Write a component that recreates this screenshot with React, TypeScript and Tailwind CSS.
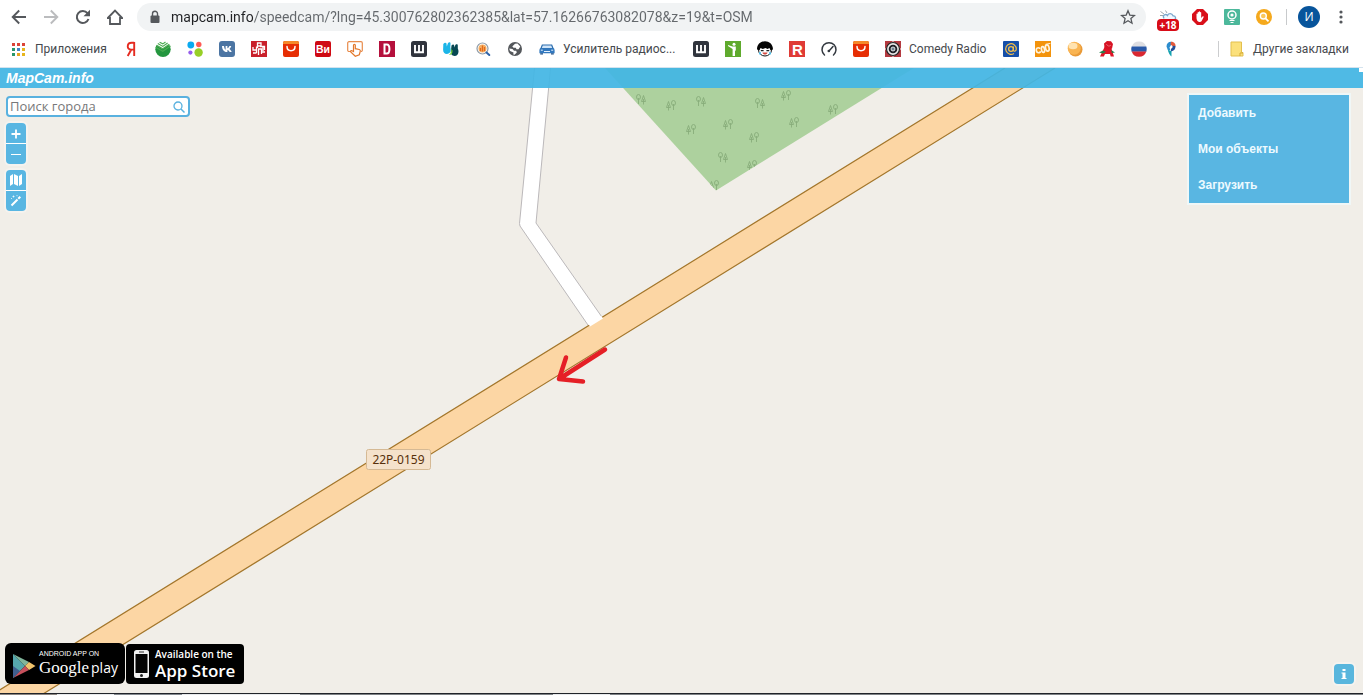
import type { ReactNode } from "react";

function Icon({ children, size = 16 }: { children: ReactNode; size?: number }) {
  return (
    <svg viewBox={`0 0 ${size} ${size}`} width={size} height={size} className="block shrink-0" aria-hidden="true">
      {children}
    </svg>
  );
}

const letter = { textAnchor: "middle" as const, fontFamily: "Liberation Sans, sans-serif", fontWeight: 700 };

function AliIcon() {
  return (
    <Icon>
      <rect width="16" height="16" rx="2" fill="#e62e04" />
      <path d="M0 2a2 2 0 0 1 2-2h12a2 2 0 0 1 2 2v1H0z" fill="#f5892a" />
      <path d="M4 5.5c0 5.5 8 5.5 8 0" fill="none" stroke="#fff" strokeWidth="1.5" strokeLinecap="round" />
    </Icon>
  );
}

function ShIcon() {
  return (
    <Icon>
      <rect width="16" height="16" rx="2.5" fill="#30343d" />
      <path d="M4 4v7.2h8V4M8 4v7" fill="none" stroke="#fff" strokeWidth="1.9" />
    </Icon>
  );
}

type Bookmark = { name: string; icon: ReactNode; label?: string; width?: string };

const bookmarks: Bookmark[] = [
  {
    name: "Яндекс",
    icon: (
      <Icon>
        <path d="M11.2 1v14M11.2 1.8H8.7C3.5 1.8 3.5 8.6 8.2 8.6h3M8.2 8.8L4.7 15" fill="none" stroke="#e52b20" strokeWidth="1.9" />
      </Icon>
    ),
  },
  {
    name: "Сбербанк",
    icon: (
      <Icon>
        <circle cx="8" cy="8.3" r="7.7" fill="#24963f" />
        <path d="M0 3.5L7.5 8 16 2.5V0H0z" fill="#fff" />
        <path d="M1.5 4.2l6.3 3.6 6.5-4.5M2.8 2.6l5 2.8 4.8-3.4M4.6 1.2l3.2 1.7L10.5 1M.6 6.3l7.2 4L15.5 5" fill="none" stroke="#49ab50" strokeWidth="1.2" />
      </Icon>
    ),
  },
  {
    name: "Авито",
    icon: (
      <Icon>
        <circle cx="3.8" cy="4" r="3.4" fill="#0aaaf0" />
        <circle cx="11.8" cy="3.5" r="2.7" fill="#ff5a55" />
        <circle cx="3.4" cy="11.6" r="2.1" fill="#965eeb" />
        <circle cx="11.6" cy="11.5" r="4.2" fill="#97cf26" />
      </Icon>
    ),
  },
  {
    name: "ВКонтакте",
    icon: (
      <Icon>
        <rect width="16" height="16" rx="3" fill="#4c75a3" />
        <path d="M3 5h2c.2 2 .8 3.2 1.6 3.7V5h1.8v2.3C9.3 7.1 10 6 10.4 5h1.9c-.4 1.3-1.1 2.3-1.9 2.9.9.5 1.8 1.5 2.3 3.1h-2.1c-.4-1.1-1.1-1.9-2.2-2.1V11C5 11.3 3.1 8.800 3 5z" fill="#fff" />
      </Icon>
    ),
  },
  {
    name: "РЧЛ",
    icon: (
      <Icon>
        <rect width="16" height="16" fill="#c9202b" />
        <path d="M6.500 7V2h3.500v3H6.500M2 6v3h3.500V5.500M5.500 9v3M7.500 14V8h3v5M9 5.500h4.500v3.500M12 5.500V10M2 12h3.500M10.500 11H14" fill="none" stroke="#fff" strokeWidth="1.300" />
      </Icon>
    ),
  },
  { name: "AliExpress", icon: <AliIcon /> },
  {
    name: "ВсеИнструменты",
    icon: (
      <Icon>
        <rect width="16" height="16" rx="2" fill="#cf0a13" />
        <text x="8" y="12" fontSize="10.5" fill="#fff" {...letter}>Ви</text>
      </Icon>
    ),
  },
  {
    name: "Опросы",
    icon: (
      <Icon>
        <path d="M4.500 10.500H2A1.300 1.300 0 0 1 .7 9.200V2A1.300 1.300 0 0 1 2 .7h12A1.300 1.300 0 0 1 15.300 2v7.200a1.300 1.300 0 0 1-1.300 1.300" fill="none" stroke="#e88c4c" strokeWidth="1.200" />
        <path d="M6.500 10.500V4.200c0-1.300 1.800-1.300 1.800 0v3.500l4 .8c1 .3 1.200 1 .9 2l-.9 3.200-4 1.500-4.600-4.300c-.5-1 .6-1.600 1.300-1.200z" fill="#fff" stroke="#e27629" strokeWidth="1.200" />
      </Icon>
    ),
  },
  {
    name: "Drom",
    icon: (
      <Icon>
        <rect width="16" height="16" fill="#b5103c" />
        <path d="M5.500 3.500h2.300c3.500 0 3.500 9 0 9H5.500z" fill="none" stroke="#fff" strokeWidth="2" />
      </Icon>
    ),
  },
  { name: "Штука", icon: <ShIcon /> },
  {
    name: "BlaBlaCar",
    icon: (
      <Icon>
        <path d="M.3 3C1.500 1.300 3 1.300 3.500 2.500L3.800 5.500 5 2C6.500.7 7.800 1.500 7.500 3L7.300 6.500C8.500 10 7 13 4 13S-.3 10.500.2 7z" fill="#1bb5e8" />
        <path d="M8.500 4.500C9.500 3 11 3 11.200 4.500V6.500L12.500 3.800C14 2.800 15 3.500 14.800 5V7.500C16.500 11 15 15 11.500 15S7.500 12 8 9z" fill="#074853" />
        <path d="M6.800 6c2.200 2 2.200 5.500-.8 7.800 2.300.5 3.700-1.500 3.500-4.300z" fill="#73d33a" />
      </Icon>
    ),
  },
  {
    name: "Поиск",
    icon: (
      <Icon>
        <circle cx="7.500" cy="7.500" r="5.500" fill="#fff" stroke="#8d9aa6" strokeWidth="1.200" />
        <circle cx="7.500" cy="7.500" r="4" fill="#f6b065" />
        <path d="M5.500 10V7M7.500 10.500V4.500M9.500 10V6" stroke="#e46a18" strokeWidth="1.300" />
        <path d="M11.500 11.500l2.800 2.500" stroke="#2d62a8" strokeWidth="2" strokeLinecap="round" />
      </Icon>
    ),
  },
  {
    name: "Сайт",
    icon: (
      <Icon>
        <circle cx="8" cy="8" r="7" fill="#54575b" />
        <path d="M8 2.800L10.500 2.500 13.300 5.500 11.500 8.200H9.500L8.800 6.800H6.500L5.300 5.500z" fill="#fff" />
        <path d="M2.200 7.500L5.500 8 7 9.800H9.200L9.800 11.500 7.500 13.800 6.300 13.500 6.500 11.500 3 10z" fill="#fff" />
      </Icon>
    ),
  },
  {
    name: "Усилитель",
    label: "Усилитель радиос...",
    width: "w-[122px]",
    icon: (
      <Icon>
        <path d="M3.300 4h9.400l1.300 3.500H2z" fill="#cfe4f8" stroke="#2c6dad" strokeWidth="1.200" />
        <path d="M1 7.300h14l.6 1.700v3.300H.4V9z" fill="#3278be" />
        <path d="M1.200 12.200H4v1.300H1.200zM12 12.200h2.800v1.300H12z" fill="#204f86" />
        <path d="M5 10.500h6M1.800 9.200h2M12.200 9.200h2" stroke="#e4f1ff" strokeWidth="1" />
      </Icon>
    ),
  },
  { name: "Штука 2", icon: <ShIcon /> },
  {
    name: "Человек",
    icon: (
      <Icon>
        <rect width="16" height="16" fill="#5faa2d" />
        <circle cx="9" cy="3.300" r="1.500" fill="#fff" />
        <path d="M3 4l4.500 1.600h3.300v4l-.8.200V15H7.600V8L3 5z" fill="#fff" />
      </Icon>
    ),
  },
  {
    name: "Пикабу",
    icon: (
      <Icon>
        <ellipse cx="8" cy="9" rx="6.500" ry="6" fill="#fff" stroke="#151515" />
        <path d="M0 8.500C0-2.500 16-2.500 16 8.500l-2.500.7-1-2.200-2 1-2-1L5.800 8 3.500 7 2.500 9.200z" fill="#050505" />
        <path d="M3.800 9.600h2.800M9.400 9.600h2.800" stroke="#222" strokeWidth="1.200" />
        <path d="M5.500 11.500h5c-.5 2.800-4.500 2.800-5 0z" fill="#d54c43" />
        <path d="M3 11v2.500M13 11v2.500" stroke="#55c4ee" strokeWidth="1.800" />
      </Icon>
    ),
  },
  {
    name: "Р",
    icon: (
      <Icon>
        <rect width="16" height="16" fill="#df3b36" />
        <text x="8.300" y="13.500" fontSize="15" fill="#fff" {...letter}>R</text>
      </Icon>
    ),
  },
  {
    name: "Скорость",
    icon: (
      <Icon>
        <path d="M3.500 14a7 7 0 1 1 9 0M8 10l4-4.500" fill="none" stroke="#333940" strokeWidth="1.500" strokeLinecap="round" />
        <circle cx="7.800" cy="10" r="1.300" fill="#333940" />
      </Icon>
    ),
  },
  { name: "AliExpress 2", icon: <AliIcon /> },
  {
    name: "Радио",
    label: "Comedy Radio",
    width: "w-[86px]",
    icon: (
      <Icon>
        <rect width="16" height="16" fill="#b43a40" />
        <path d="M8 0l8 8-8 8-8-8z" fill="#eee" />
        <circle cx="8" cy="8" r="6.500" fill="#e9e9e9" stroke="#222" strokeWidth="1.200" />
        <circle cx="8" cy="8" r="4.300" fill="#1e2026" />
        <circle cx="8" cy="8" r="2" fill="#6f8190" stroke="#fff" strokeWidth=".8" />
      </Icon>
    ),
  },
  {
    name: "Почта",
    icon: (
      <Icon>
        <rect width="16" height="16" rx="1" fill="#164fa9" />
        <circle cx="8" cy="8" r="2.400" fill="none" stroke="#f3bd48" strokeWidth="1.300" />
        <path d="M10.400 5.500v3.700c.2 1.700 2.900 1.300 2.900-1.200A5.300 5.300 0 1 0 11 12.400" fill="none" stroke="#f3bd48" strokeWidth="1.200" />
      </Icon>
    ),
  },
  {
    name: "Кольца",
    icon: (
      <Icon>
        <rect width="16" height="16" fill="#f3930c" />
        <g fill="none" stroke="#fff4df" strokeWidth="1.700" strokeLinecap="round">
          <path d="M4.800 7.200C2.500 6 1 7.500 1.300 9.500S3.500 12.500 5.300 11" />
          <ellipse cx="8" cy="8.500" rx="1.500" ry="3" transform="rotate(-12 8 8.500)" />
          <ellipse cx="12.300" cy="7" rx="1.800" ry="3.200" transform="rotate(-12 12.300 7)" />
          <path d="M11 3.200l4-.7" strokeWidth="1" />
        </g>
      </Icon>
    ),
  },
  {
    name: "Шар",
    icon: (
      <Icon>
        <circle cx="8.500" cy="8.500" r="7" fill="#e99a38" />
        <circle cx="7.200" cy="7.200" r="6.500" fill="#f9b452" />
        <ellipse cx="6" cy="5" rx="4.500" ry="3.200" fill="#ffe3b0" />
      </Icon>
    ),
  },
  {
    name: "Ашан",
    icon: (
      <Icon>
        <path d="M1 15.500L7 3h4l4 12.500h-3.300L11 13H6l-1.200 2.500z" fill="#df1527" />
        <path d="M5 2.500L8 0l4 .3L14 3l-1 4.500-4 1.200L5.500 6.500z" fill="#d71324" />
        <path d="M0 11.500L4 9.500l3 1.300-3 1.700zM12 9l4 2.500-3 .5z" fill="#26804a" />
        <path d="M7.500 3c1 2.500 3 2.500 4.500 1" stroke="#f5a5ab" strokeWidth=".6" fill="none" />
      </Icon>
    ),
  },
  {
    name: "Россия",
    icon: (
      <Icon>
        <path d="M.7 5.700a7.700 7.700 0 0 1 14.600 0z" fill="#dedee2" />
        <path d="M.7 5.500h14.600c.5 1.700.5 3.500 0 5.200H.7a8 8 0 0 1 0-5.200z" fill="#2959a8" />
        <path d="M.7 10.500h14.600a7.700 7.700 0 0 1-14.600 0z" fill="#da2831" />
      </Icon>
    ),
  },
  {
    name: "Ростелеком",
    icon: (
      <Icon>
        <path d="M3.500 5.500C3.500 2 6 .5 8.500.8L8 4 6.500 6.500 7.500 9.500 4.800 9z" fill="#2c8dce" />
        <path d="M8 .7c3-.2 4.800 2 4.500 4.800L9.500 5 7.500 3.500z" fill="#e4593b" />
        <path d="M12.500 5c.2 3-1.500 5-4.500 5.500V7.800C9.300 7.300 9.800 6.500 9.500 4.800z" fill="#224f98" />
        <path d="M4.800 8.800l3.700 1.500v5.200C6.500 14 5.300 11.500 4.800 8.800z" fill="#15a2b0" />
      </Icon>
    ),
  },
];

const appColors = ["bg-[#db4437]", "bg-[#db4437]", "bg-[#db4437]", "bg-[#28966a]", "bg-[#4285c4]", "bg-[#e7b51d]", "bg-[#28966a]", "bg-[#e7a51d]", "bg-[#e7b51d]"];

const trees: [number, number, boolean][] = [
  [641, 31, false], [671, 37, true], [701, 33, false], [760, 35, false], [786, 27, true], [833, 41, true], [691, 61, true], [728, 56, true], [754, 69, true], [794, 54, true], [723, 89, false], [752, 97, true], [714, 117, true],
];

function Tree({ x, y, flip }: { x: number; y: number; flip: boolean }) {
  return (
    <g transform={`translate(${x} ${y})${flip ? " scale(-1 1)" : ""}`} fill="none" stroke="#88ad7b" strokeWidth=".9">
      <ellipse cx="-2.500" cy="-2" rx="2" ry="2.500" />
      <path d="M-2.500-1V5M2.500-3.500L.5 2.500h4zM2.500 0v5.500" />
    </g>
  );
}

function MapCanvas() {
  return (
    <svg className="absolute inset-0 h-full w-full" viewBox="0 0 1363 625" preserveAspectRatio="xMidYMid slice" role="img" aria-label="Карта">
      <defs>
        <clipPath id="wood"><path d="M605 0L716 122.500 914 0z" /></clipPath>
      </defs>
      <rect width="1363" height="625" fill="#f1eee8" />
      <path d="M605 0L716 122.500 914 0z" fill="#add19e" />
      <g clipPath="url(#wood)">
        {trees.map(([x, y, flip]) => <Tree key={`${x}-${y}`} x={x} y={y} flip={flip} />)}
      </g>
      <path d="M534.500 0L519.500 155.500 520 158 590 260 604 252 536 155 550.500 0z" fill="#fff" stroke="#bbb8ba" />
      <path d="M1005 0L-7 626H43L1055 0z" fill="#fcd6a4" />
      <path d="M1005 0L-7 626M43 626L1055 0" fill="none" stroke="#a3762b" strokeWidth="1.200" />
      <path d="M588.500 256L601.500 248 603 250.500 590 258.500z" fill="#fff" />
      <path d="M605 281.500L559 311M566 289.500L559 311 583 313.500" fill="none" stroke="#e51f26" strokeWidth="4.500" strokeLinecap="round" strokeLinejoin="round" />
      <rect x="366.500" y="381.500" width="64" height="20" rx="2" fill="#f5e2cb" stroke="#d5b994" />
      <text x="398.500" y="396" textAnchor="middle" fontFamily="Noto Sans, sans-serif" fontSize="12" fill="#57300b">22Р-0159</text>
    </svg>
  );
}

const toolButton = "flex size-8 shrink-0 items-center justify-center text-[#55585c]";
const mapButton = "flex h-5 w-5 items-center justify-center bg-[#59b6e2] text-white";

function Toolbar() {
  return (
    <div className="flex h-[34px] items-center pl-[3px] pr-[6px]">
      <button className={toolButton} aria-label="Назад">
        <Icon><path d="M15 8H2M8.200 1.500L1.700 8l6.500 6.500" fill="none" stroke="currentColor" strokeWidth="1.900" /></Icon>
      </button>
      <button className="flex size-8 shrink-0 items-center justify-center text-[#bbbcbe]" aria-label="Вперёд">
        <Icon><path d="M1 8h13M7.800 1.500L14.300 8l-6.500 6.500" fill="none" stroke="currentColor" strokeWidth="1.900" /></Icon>
      </button>
      <button className={toolButton} aria-label="Обновить">
        <Icon>
          <path d="M13.500 10A6 6 0 1 1 12.500 4.200L14 5.800" fill="none" stroke="currentColor" strokeWidth="2" />
          <path d="M15 .8v6.500H8.500z" fill="currentColor" />
        </Icon>
      </button>
      <button className={toolButton} aria-label="Домашняя страница">
        <Icon><path d="M.8 9L8 1.600 15.200 9H13v6H3V9z" fill="none" stroke="currentColor" strokeWidth="1.800" /></Icon>
      </button>
      <div className="ml-[6px] flex h-7 min-w-0 flex-1 items-center rounded-full bg-[#f1f3f4] pl-[10px] pr-[10px] text-[#55585c]">
        <Icon>
          <rect x="3.500" y="6.500" width="9" height="7.500" rx="1" fill="currentColor" />
          <path d="M5.500 7V4.700a2.500 2.500 0 0 1 5 0V7" fill="none" stroke="currentColor" strokeWidth="1.400" />
        </Icon>
        <input
          aria-label="Адрес"
          className="ml-2 min-w-0 flex-1 bg-[linear-gradient(90deg,#202124_82px,#64686c_82px)] bg-clip-text font-['Roboto','Noto_Sans',sans-serif] text-sm text-transparent outline-none"
          defaultValue="mapcam.info/speedcam/?lng=45.300762802362385&lat=57.16266763082078&z=19&t=OSM"
        />
        <button aria-label="Добавить в закладки">
          <Icon><path d="M8 1.800l1.800 4.300 4.700.4-3.600 3.100 1.100 4.600L8 11.700l-4 2.500 1.100-4.600-3.600-3.100 4.700-.4z" fill="none" stroke="currentColor" strokeWidth="1.300" /></Icon>
        </button>
      </div>
      <button className="relative ml-[6px] flex size-8 shrink-0 justify-center" aria-label="Погода">
        <svg width="24" height="24" viewBox="0 0 24 24" className="mt-2" aria-hidden="true">
          <path d="M8 9.500c-2-3.500 1.500-5 3.500-3 1-2.500 4.500-2.500 5.500.3 3-.3 3.500 3.700.8 4.200" fill="#f0f8ff" stroke="#7aa7cc" strokeWidth="1.300" />
          <path d="M4.500 2.500L8 5M9.500 1.500l1.500 2.500M4 6.500h3" stroke="#9da7ac" />
        </svg>
        <span className="absolute left-[5px] top-[18px] flex h-3 w-[22px] items-center justify-center rounded-sm bg-[#d80c18] font-['Open_Sans',sans-serif] text-[10px] font-bold text-white">+18</span>
      </button>
      <button className={toolButton} aria-label="Блокировщик рекламы">
        <Icon>
          <path d="M5 0h6l5 5v6l-5 5H5l-5-5V5z" fill="#d9101a" />
          <path d="M4.500 8.500V5c0-.8 1.100-.8 1.100 0v2-3.500c0-.8 1.200-.8 1.200 0v3-3.700c0-.8 1.200-.8 1.200 0v3.700-3c0-.8 1.200-.8 1.200 0V9l1.300-1.500c.8-.5 1.500.2 1 1L9.500 12.300c-1 1.200-5 1.200-5-3.800z" fill="#fff" />
        </Icon>
      </button>
      <button className={toolButton} aria-label="Подсказки">
        <Icon>
          <rect width="16" height="16" rx="1" fill="#4cb89b" />
          <circle cx="8" cy="6" r="4" fill="none" stroke="#fff" strokeWidth="1.500" />
          <circle cx="8" cy="6" r="1.600" fill="#fff" />
          <path d="M5.500 11.500h5M6.500 13.500h3" stroke="#fff" />
        </Icon>
      </button>
      <button className={toolButton} aria-label="Поиск">
        <Icon>
          <circle cx="8" cy="8" r="8" fill="#f5a91d" />
          <circle cx="7.300" cy="7" r="3" fill="#fbc75c" stroke="#fff" strokeWidth="1.400" />
          <path d="M9.500 9.300l3 3" stroke="#fff" strokeWidth="1.800" />
        </Icon>
      </button>
      <span className="mx-[6px] h-4 w-px shrink-0 bg-[#c8cacc]" />
      <button className="ml-[5px] flex size-[22px] shrink-0 items-center justify-center rounded-full bg-[#07549b] font-['Open_Sans',sans-serif] text-xs text-white" aria-label="Профиль">И</button>
      <button className="ml-[5px] flex size-8 shrink-0 items-center justify-center text-[#55585c]" aria-label="Меню">
        <Icon>
          <circle cx="8" cy="3" r="1.600" fill="currentColor" />
          <circle cx="8" cy="8" r="1.600" fill="currentColor" />
          <circle cx="8" cy="13" r="1.600" fill="currentColor" />
        </Icon>
      </button>
    </div>
  );
}

function Bookmarks() {
  return (
    <nav className="flex h-[33px] items-center overflow-hidden whitespace-nowrap pb-[3px] pl-3 pr-[14px] font-['Roboto','Noto_Sans',sans-serif] text-xs text-[#46494d]">
      <a href="#apps" className="flex w-[111px] shrink-0 items-center gap-[10px]">
        <span className="grid size-[13px] grid-cols-3 gap-[2px]">
          {appColors.map((color, i) => <span key={i} className={color} />)}
        </span>
        Приложения
      </a>
      <div className="flex min-w-0 flex-1 gap-4 overflow-hidden">
        {bookmarks.map((b) => (
          <a key={b.name} href="#bookmark" aria-label={b.label ?? b.name} className="flex shrink-0 items-center">
            {b.icon}
            {b.label && <span className={`pl-2 ${b.width}`}>{b.label}</span>}
          </a>
        ))}
      </div>
      <a href="#other" className="flex shrink-0 items-center gap-2 border-l border-[#cccdcf] pl-[10px]">
        <Icon>
          <path d="M2 1h10.500v10.500H14V15H2z" fill="#fbe07b" stroke="#e3bf4e" />
          <path d="M11 15v-3h3" fill="none" stroke="#d5ab35" />
        </Icon>
        Другие закладки
      </a>
    </nav>
  );
}

function StoreBadges() {
  return (
    <div className="flex items-end gap-px">
      <a href="#google-play" className="flex h-[41px] w-[120px] items-center gap-[3px] rounded-md bg-black pl-[7px] text-white">
        <svg width="24" height="28" viewBox="0 0 24 28" className="mt-1 shrink-0" aria-hidden="true">
          <path d="M1 2v24l12-12z" fill="#55a6ac" />
          <path d="M1 2l12 12 4-4z" fill="#80b59b" />
          <path d="M17 10l6.500 4-6.500 4-4-4z" fill="#f0c26b" />
          <path d="M1 26l12-12 4 4z" fill="#c7505c" />
          <path d="M1 26V14l7 5z" fill="#405f8e" />
        </svg>
        <span className="flex flex-col whitespace-nowrap">
          <span className="font-['Liberation_Sans',sans-serif] text-[7px] leading-[8px]">ANDROID APP ON</span>
          <span className="flex items-baseline gap-[2px] leading-5">
            <span className="font-['Liberation_Serif',serif] text-[17px]">Google</span>
            <span className="font-['Open_Sans',sans-serif] text-sm">play</span>
          </span>
        </span>
      </a>
      <a href="#app-store" className="flex h-10 w-[118px] items-center gap-[6px] rounded-[4px] bg-black pl-2 text-white">
        <svg width="15" height="28" viewBox="0 0 15 28" className="shrink-0" aria-hidden="true">
          <rect width="15" height="28" rx="2.500" fill="#f2f2f2" />
          <rect x="1.500" y="4" width="12" height="19" fill="#050505" />
          <path d="M5 2h5" stroke="#333" />
          <circle cx="7.500" cy="25.500" r="1.500" fill="#222" />
        </svg>
        <span className="flex flex-col whitespace-nowrap font-['Open_Sans','Noto_Sans',sans-serif] font-semibold">
          <span className="text-[10px] leading-[14px]">Available on the</span>
          <span className="text-[17px] leading-5">App Store</span>
        </span>
      </a>
    </div>
  );
}

export default function App() {
  return (
    <div className="flex min-h-screen flex-col bg-white">
      <header>
        <Toolbar />
        <Bookmarks />
        <div className="h-px bg-[#d4e3ee]" />
      </header>
      <main className="relative flex flex-1 flex-col overflow-hidden">
        <MapCanvas />
        <div className="relative flex h-5 items-center bg-[#43b6e4]/93 pl-[6px]">
          <h1 className="font-['Liberation_Sans',sans-serif] text-sm font-bold italic text-white">MapCam.info</h1>
          <span className="absolute right-0 top-0 size-1 bg-white" />
        </div>
        <div className="relative flex items-start justify-between pl-[6px] pr-[14px] pt-[7px]">
          <div className="flex flex-col gap-[6px] pt-px">
            <label className="flex h-[21px] w-[184px] items-center rounded-sm border-2 border-[#59b1df] bg-white pl-[2px] pr-[3px] text-[#59b1df]">
              <input type="search" placeholder="Поиск города" aria-label="Поиск города" className="min-w-0 flex-1 font-['Open_Sans','Noto_Sans',sans-serif] text-[13px] text-[#555] outline-none placeholder:text-[#77787a]" />
              <svg width="12" height="12" viewBox="0 0 12 12" aria-hidden="true">
                <circle cx="5" cy="5" r="4" fill="none" stroke="currentColor" strokeWidth="1.300" />
                <path d="M8 8l3.500 3.500" stroke="currentColor" strokeWidth="1.500" />
              </svg>
            </label>
            <div className="flex w-5 flex-col gap-px rounded-sm bg-white ring-2 ring-white/30">
              <button className={`${mapButton} rounded-t-sm`} aria-label="Приблизить">
                <Icon><path d="M3.500 9h9M8 4.500v9" stroke="currentColor" strokeWidth="1.800" /></Icon>
              </button>
              <button className={`${mapButton} rounded-b-sm`} aria-label="Отдалить">
                <Icon><path d="M3 8.500h10" stroke="currentColor" /></Icon>
              </button>
            </div>
            <div className="flex w-5 flex-col gap-px rounded-sm bg-white ring-2 ring-white/30">
              <button className={`${mapButton} rounded-t-sm`} aria-label="Слои">
                <Icon><path d="M2 4l3-2v10l-3 2zM6 2l4 2v10l-4-2zM11 4l3-2v10l-3 2z" fill="currentColor" /></Icon>
              </button>
              <button className={`${mapButton} rounded-b-sm`} aria-label="Инструменты">
                <Icon>
                  <path d="M3.500 12.500l6-6M10.300 5.700l2-2" stroke="currentColor" strokeWidth="2" />
                  <path d="M5.500 2.500v2M4.500 3.500h2M9 2v1.200M3 5.500h1" stroke="currentColor" strokeWidth=".7" />
                </Icon>
              </button>
            </div>
          </div>
          <nav className="flex w-40 flex-col bg-[#59b6e2] font-['Liberation_Sans',sans-serif] text-xs font-bold text-[#edfaff] ring-2 ring-[#f0fbfd]/70">
            <a href="#add" className="flex h-9 items-center px-[9px]">Добавить</a>
            <a href="#mine" className="flex h-9 items-center px-[9px]">Мои объекты</a>
            <a href="#load" className="flex h-9 items-center px-[9px]">Загрузить</a>
          </nav>
        </div>
        <div className="relative mt-auto flex items-end justify-between pb-[9px] pl-[5px] pr-[9px]">
          <StoreBadges />
          <button className="flex size-5 items-center justify-center rounded-sm bg-[#59b6dd] text-white ring-2 ring-white/30" aria-label="Информация">
            <Icon><path d="M6.500 3h3v2h-3zM5.500 6.500h4V12h1v1h-5v-1h1V7.500h-1z" fill="currentColor" /></Icon>
          </button>
        </div>
      </main>
      <footer className="flex h-[2px] border-t border-[#202329] bg-[#7e8285]">
        <span className="w-[57px] bg-[#8b8580]" />
        <span className="w-[57px] bg-[#e8eaec]" />
        <span className="w-[68px] bg-[#858a90]" />
        <span className="w-[118px] bg-[#e8eaec]" />
        <span className="w-[253px] bg-[#7e8285]" />
        <span className="w-[57px] bg-[#e8eaec]" />
      </footer>
    </div>
  );
}
